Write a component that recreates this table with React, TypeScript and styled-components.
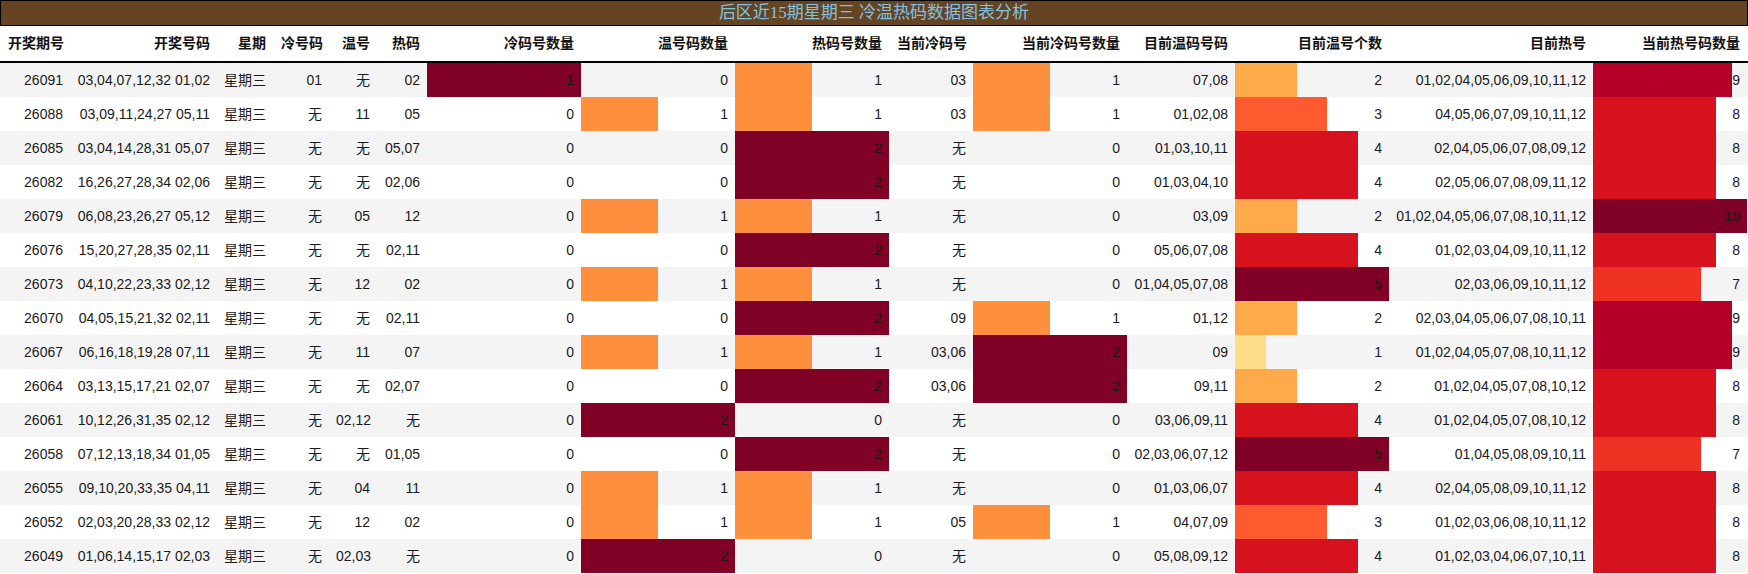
import { createGlobalStyle } from "styled-components";
import styled from "styled-components";

// one row of the draw table
interface DrawRow {
  issue: string;
  numbers: string;
  weekday: string;
  cold: string;
  warm: string;
  hot: string;
  coldCount: number;
  warmCount: number;
  hotCount: number;
  curCold: string;
  curColdCount: number;
  curWarm: string;
  curWarmCount: number;
  curHot: string;
  curHotCount: number;
}

const rows: DrawRow[] = [
  { issue: "26091", numbers: "03,04,07,12,32 01,02", weekday: "星期三", cold: "01", warm: "无", hot: "02", coldCount: 1, warmCount: 0, hotCount: 1, curCold: "03", curColdCount: 1, curWarm: "07,08", curWarmCount: 2, curHot: "01,02,04,05,06,09,10,11,12", curHotCount: 9 },
  { issue: "26088", numbers: "03,09,11,24,27 05,11", weekday: "星期三", cold: "无", warm: "11", hot: "05", coldCount: 0, warmCount: 1, hotCount: 1, curCold: "03", curColdCount: 1, curWarm: "01,02,08", curWarmCount: 3, curHot: "04,05,06,07,09,10,11,12", curHotCount: 8 },
  { issue: "26085", numbers: "03,04,14,28,31 05,07", weekday: "星期三", cold: "无", warm: "无", hot: "05,07", coldCount: 0, warmCount: 0, hotCount: 2, curCold: "无", curColdCount: 0, curWarm: "01,03,10,11", curWarmCount: 4, curHot: "02,04,05,06,07,08,09,12", curHotCount: 8 },
  { issue: "26082", numbers: "16,26,27,28,34 02,06", weekday: "星期三", cold: "无", warm: "无", hot: "02,06", coldCount: 0, warmCount: 0, hotCount: 2, curCold: "无", curColdCount: 0, curWarm: "01,03,04,10", curWarmCount: 4, curHot: "02,05,06,07,08,09,11,12", curHotCount: 8 },
  { issue: "26079", numbers: "06,08,23,26,27 05,12", weekday: "星期三", cold: "无", warm: "05", hot: "12", coldCount: 0, warmCount: 1, hotCount: 1, curCold: "无", curColdCount: 0, curWarm: "03,09", curWarmCount: 2, curHot: "01,02,04,05,06,07,08,10,11,12", curHotCount: 10 },
  { issue: "26076", numbers: "15,20,27,28,35 02,11", weekday: "星期三", cold: "无", warm: "无", hot: "02,11", coldCount: 0, warmCount: 0, hotCount: 2, curCold: "无", curColdCount: 0, curWarm: "05,06,07,08", curWarmCount: 4, curHot: "01,02,03,04,09,10,11,12", curHotCount: 8 },
  { issue: "26073", numbers: "04,10,22,23,33 02,12", weekday: "星期三", cold: "无", warm: "12", hot: "02", coldCount: 0, warmCount: 1, hotCount: 1, curCold: "无", curColdCount: 0, curWarm: "01,04,05,07,08", curWarmCount: 5, curHot: "02,03,06,09,10,11,12", curHotCount: 7 },
  { issue: "26070", numbers: "04,05,15,21,32 02,11", weekday: "星期三", cold: "无", warm: "无", hot: "02,11", coldCount: 0, warmCount: 0, hotCount: 2, curCold: "09", curColdCount: 1, curWarm: "01,12", curWarmCount: 2, curHot: "02,03,04,05,06,07,08,10,11", curHotCount: 9 },
  { issue: "26067", numbers: "06,16,18,19,28 07,11", weekday: "星期三", cold: "无", warm: "11", hot: "07", coldCount: 0, warmCount: 1, hotCount: 1, curCold: "03,06", curColdCount: 2, curWarm: "09", curWarmCount: 1, curHot: "01,02,04,05,07,08,10,11,12", curHotCount: 9 },
  { issue: "26064", numbers: "03,13,15,17,21 02,07", weekday: "星期三", cold: "无", warm: "无", hot: "02,07", coldCount: 0, warmCount: 0, hotCount: 2, curCold: "03,06", curColdCount: 2, curWarm: "09,11", curWarmCount: 2, curHot: "01,02,04,05,07,08,10,12", curHotCount: 8 },
  { issue: "26061", numbers: "10,12,26,31,35 02,12", weekday: "星期三", cold: "无", warm: "02,12", hot: "无", coldCount: 0, warmCount: 2, hotCount: 0, curCold: "无", curColdCount: 0, curWarm: "03,06,09,11", curWarmCount: 4, curHot: "01,02,04,05,07,08,10,12", curHotCount: 8 },
  { issue: "26058", numbers: "07,12,13,18,34 01,05", weekday: "星期三", cold: "无", warm: "无", hot: "01,05", coldCount: 0, warmCount: 0, hotCount: 2, curCold: "无", curColdCount: 0, curWarm: "02,03,06,07,12", curWarmCount: 5, curHot: "01,04,05,08,09,10,11", curHotCount: 7 },
  { issue: "26055", numbers: "09,10,20,33,35 04,11", weekday: "星期三", cold: "无", warm: "04", hot: "11", coldCount: 0, warmCount: 1, hotCount: 1, curCold: "无", curColdCount: 0, curWarm: "01,03,06,07", curWarmCount: 4, curHot: "02,04,05,08,09,10,11,12", curHotCount: 8 },
  { issue: "26052", numbers: "02,03,20,28,33 02,12", weekday: "星期三", cold: "无", warm: "12", hot: "02", coldCount: 0, warmCount: 1, hotCount: 1, curCold: "05", curColdCount: 1, curWarm: "04,07,09", curWarmCount: 3, curHot: "01,02,03,06,08,10,11,12", curHotCount: 8 },
  { issue: "26049", numbers: "01,06,14,15,17 02,03", weekday: "星期三", cold: "无", warm: "02,03", hot: "无", coldCount: 0, warmCount: 2, hotCount: 0, curCold: "无", curColdCount: 0, curWarm: "05,08,09,12", curWarmCount: 4, curHot: "01,02,03,04,06,07,10,11", curHotCount: 8 },
];

const headers = [
  "开奖期号", "开奖号码", "星期", "冷号码", "温号", "热码", "冷码号数量", "温号码数量",
  "热码号数量", "当前冷码号", "当前冷码号数量", "目前温码号码", "目前温号个数", "目前热号", "当前热号码数量",
];

const columns = "70px 147px 56px 56px 48px 50px 154px 154px 154px 84px 154px 108px 154px 204px 154px";

// colour scale by share of the column max
const barColor = (ratio: number) => {
  if (ratio >= 1) return "#810026";
  if (ratio >= 0.9) return "#b40029";
  if (ratio >= 0.8) return "#d7121f";
  if (ratio >= 0.7) return "#ef3123";
  if (ratio >= 0.6) return "#fd5b2f";
  if (ratio >= 0.5) return "#fd8f3d";
  if (ratio >= 0.4) return "#feaa4a";
  return "#fedd88";
};

const GlobalStyle = createGlobalStyle`
  body {
    margin: 0;
    background: #fff;
    font-family: "Liberation Sans", "Noto Sans CJK SC", sans-serif;
  }
`;

const Page = styled.div`
  width: 1748px;
  overflow: hidden;
`;

const TitleBar = styled.div`
  height: 24px;
  border: 1px solid #000;
  background: #664422;
  color: #80c2e2;
  font-family: "Liberation Serif", "Noto Sans CJK SC", serif;
  font-size: 17px;
  line-height: 24px;
  text-align: center;
`;

const HeaderRow = styled.div`
  display: grid;
  grid-template-columns: ${columns};
  height: 35px;
  border-bottom: 2px solid #000;
  background: #fff;
`;

const HeadCell = styled.div<{ $left?: boolean }>`
  padding: 0 7px 0 8px;
  font-size: 14px;
  font-weight: bold;
  line-height: 35px;
  color: #111;
  white-space: nowrap;
  text-align: ${(p) => (p.$left ? "left" : "right")};
`;

const Row = styled.div<{ $shade: boolean }>`
  display: grid;
  grid-template-columns: ${columns};
  height: 34px;
  background: ${(p) => (p.$shade ? "#f4f4f4" : "#fff")};
`;

const Cell = styled.div`
  padding: 0 7px;
  font-size: 14px;
  line-height: 34px;
  color: #1a1a1a;
  text-align: right;
  white-space: nowrap;
`;

const BarCell = styled(Cell)<{ $pct: number; $color: string }>`
  background: ${(p) =>
    p.$pct > 0
      ? `linear-gradient(to right, ${p.$color} 0, ${p.$color} ${p.$pct}%, transparent ${p.$pct}%)`
      : "transparent"};
`;

const Bar = ({ value, max }: { value: number; max: number }) => {
  const ratio = value / max;
  return (
    <BarCell $pct={ratio * 100} $color={barColor(ratio)}>
      {value}
    </BarCell>
  );
};

const maxOf = (key: keyof DrawRow) => Math.max(...rows.map((r) => r[key] as number));

export default function App() {
  const maxCold = maxOf("coldCount");
  const maxWarm = maxOf("warmCount");
  const maxHot = maxOf("hotCount");
  const maxCurCold = maxOf("curColdCount");
  const maxCurWarm = maxOf("curWarmCount");
  const maxCurHot = 10;

  return (
    <Page>
      <GlobalStyle />
      <TitleBar>后区近15期星期三 冷温热码数据图表分析</TitleBar>
      <HeaderRow>
        {headers.map((h, i) => (
          <HeadCell key={h} $left={i === 0}>
            {h}
          </HeadCell>
        ))}
      </HeaderRow>
      {rows.map((r, i) => (
        <Row key={r.issue} $shade={i % 2 === 0}>
          <Cell>{r.issue}</Cell>
          <Cell>{r.numbers}</Cell>
          <Cell>{r.weekday}</Cell>
          <Cell>{r.cold}</Cell>
          <Cell>{r.warm}</Cell>
          <Cell>{r.hot}</Cell>
          <Bar value={r.coldCount} max={maxCold} />
          <Bar value={r.warmCount} max={maxWarm} />
          <Bar value={r.hotCount} max={maxHot} />
          <Cell>{r.curCold}</Cell>
          <Bar value={r.curColdCount} max={maxCurCold} />
          <Cell>{r.curWarm}</Cell>
          <Bar value={r.curWarmCount} max={maxCurWarm} />
          <Cell>{r.curHot}</Cell>
          <Bar value={r.curHotCount} max={maxCurHot} />
        </Row>
      ))}
    </Page>
  );
}
